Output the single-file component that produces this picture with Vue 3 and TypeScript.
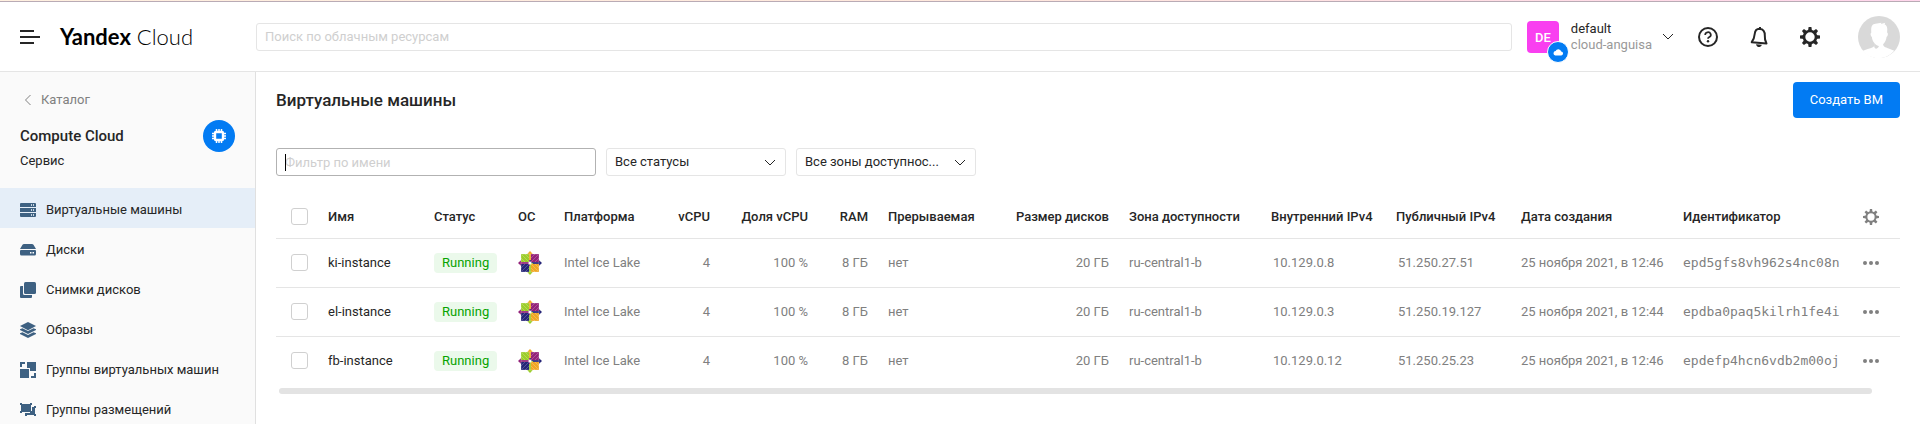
<script setup lang="ts">
import { ref } from 'vue'

interface Instance {
  name: string
  internal: string
  external: string
  created: string
  id: string
}

const instances: Instance[] = [
  { name: 'ki-instance', internal: '10.129.0.8', external: '51.250.27.51', created: '25 ноября 2021, в 12:46', id: 'epd5gfs8vh962s4nc08n' },
  { name: 'el-instance', internal: '10.129.0.3', external: '51.250.19.127', created: '25 ноября 2021, в 12:44', id: 'epdba0paq5kilrh1fe4i' },
  { name: 'fb-instance', internal: '10.129.0.12', external: '51.250.25.23', created: '25 ноября 2021, в 12:46', id: 'epdefp4hcn6vdb2m00oj' },
]

const menu: { icon: string; label: string }[] = [
  { icon: 'servers', label: 'Виртуальные машины' },
  { icon: 'disk', label: 'Диски' },
  { icon: 'snapshots', label: 'Снимки дисков' },
  { icon: 'layers', label: 'Образы' },
  { icon: 'groups', label: 'Группы виртуальных машин' },
  { icon: 'placement', label: 'Группы размещений' },
]

const teeth: number[] = [0, 45, 90, 135, 180, 225, 270, 315]
const search = ref('')
const filter = ref('')
</script>

<template>
  <div class="page">
    <header class="header">
      <div class="brand">
        <button class="icon-btn" type="button" aria-label="Меню">
          <svg width="20" height="14" viewBox="0 0 20 14" fill="none" stroke="#262626" stroke-width="2">
            <path d="M0 1h14M0 7h20M0 13h14" />
          </svg>
        </button>
        <a class="logo" href="#"><b>Yandex</b> Cloud</a>
      </div>
      <input v-model="search" class="field search" type="text" placeholder="Поиск по облачным ресурсам" aria-label="Поиск по облачным ресурсам" />
      <button class="account" type="button">
        <span class="folder">
          DE
          <span class="badge">
            <svg width="10" height="8" viewBox="0 0 10 8" fill="#fff"><path d="M2.2 7.5h5.6a2 2 0 0 0 .4-4A3 3 0 0 0 2.6 3 2.3 2.3 0 0 0 2.2 7.500z" /></svg>
          </span>
        </span>
        <span class="names"><span>default</span><span class="muted">cloud-anguisa</span></span>
        <svg width="12" height="8" viewBox="0 0 12 8" fill="none" stroke="#262626"><path d="M1 1l5 5 5-5" /></svg>
      </button>
      <div class="tools">
        <button class="icon-btn" type="button" aria-label="Помощь">
          <svg width="20" height="20" viewBox="0 0 20 20" fill="none" stroke="#262626" stroke-width="2">
            <circle cx="10" cy="10" r="9" />
            <path d="M7.200 8a2.800 2.600 0 1 1 4.200 2.100c-.9.500-1.400.8-1.400 1.700" stroke-width="1.700" />
            <circle cx="10" cy="14.300" r="1.200" fill="#262626" stroke="none" />
          </svg>
        </button>
        <button class="icon-btn" type="button" aria-label="Уведомления">
          <svg width="18" height="20" viewBox="0 0 18 20" fill="none" stroke="#262626" stroke-width="2" stroke-linejoin="round">
            <path d="M10 1.800C6.800 1.600 5 3.800 4.700 7c-.3 3.600-.9 5.500-3 8.200l14.800 1.300c-1.500-2.600-1.900-5.200-1.700-8.200.2-3.600-1.700-6.300-4.800-6.300z" />
            <path d="M6 17.300c.6 3.600 5 3.600 5.800.4z" fill="#262626" stroke="none" />
            <path d="M10 0v2" />
          </svg>
        </button>
        <button class="icon-btn" type="button" aria-label="Настройки">
          <svg width="20" height="20" viewBox="-10 -10 20 20" fill="#262626">
            <circle r="6" fill="none" stroke="#262626" stroke-width="2.600" />
            <path v-for="a in teeth" :key="a" d="M-2 -6L-1.400 -10H1.400L2 -6z" :transform="`rotate(${a})`" />
          </svg>
        </button>
      </div>
      <button class="icon-btn" type="button" aria-label="Профиль">
        <svg width="42" height="42" viewBox="0 0 42 42">
          <circle cx="21" cy="21" r="21" fill="#d9d9d9" />
          <path d="M4.500 35c3-1.600 7.500-2.300 10.300-3.700 1.400-.7 1.700-2.100 1.600-4.300-1.500-1.600-2.300-3.600-2.500-6-1.500-.7-1.700-3.900-.6-4.300C12.800 10.500 14 8 17.500 7.700l6-.9-.5 1.200 4.300-1.200-.8 1.500c3.500 1.700 2.800 5.400 2.600 8.200 1.200.5.9 3.500-.5 4.300-.3 3.300-1.600 5.800-3.500 7.500.2 2.500 1.800 3 5.500 4.100l5.700 2.400A21 21 0 0 1 4.500 35z" fill="#fff" />
          <path d="M16.400 27c1.800 2.200 3.300 3 4.500 3 -.2 1.500-1.500 2.500-3 2.700-2-.7-2-3-1.500-5.700z" fill="#d9d9d9" />
        </svg>
      </button>
    </header>

    <div class="body">
      <aside class="sidebar">
        <a class="back" href="#">
          <svg width="6" height="12" viewBox="0 0 6 12" fill="none" stroke="#808080"><path d="M5.500 1l-5 5 5 5" /></svg>
          Каталог
        </a>
        <div class="service">
          <div class="service-text"><strong>Compute Cloud</strong><span>Сервис</span></div>
          <span class="chip">
            <svg width="14" height="14" viewBox="0 0 14 14" fill="none" stroke="#fff">
              <rect x="3" y="3" width="8" height="8" rx="1" stroke-width="2.400" />
              <path d="M4.500 0v3M7 0v3M9.500 0v3M4.500 11v3M7 11v3M9.500 11v3M0 4.500h3M0 7h3M0 9.500h3M11 4.500h3M11 7h3M11 9.500h3" stroke-width="1.500" />
            </svg>
          </span>
        </div>
        <nav class="menu">
          <a v-for="(item, i) in menu" :key="item.icon" href="#" :class="{ active: i === 0 }">
            <svg width="16" height="16" viewBox="0 0 16 16" fill="#3e6182">
              <template v-if="item.icon === 'servers'">
                <path d="M1 1h14a1 1 0 0 1 1 1v3H0V2a1 1 0 0 1 1-1zM0 6h16v4H0zM0 11h16v3a1 1 0 0 1-1 1H1a1 1 0 0 1-1-1z" />
                <path d="M11 2h1v2h-1zM13 2h1v2h-1zM11 7h1v2h-1zM13 7h1v2h-1zM11 12h1v2h-1zM13 12h1v2h-1z" fill="#c5d3e0" />
              </template>
              <template v-else-if="item.icon === 'disk'">
                <path d="M4 2h8a2 2 0 0 1 1.500.7L16 7H0l2.500-4.300A2 2 0 0 1 4 2zM1 8h14a1 1 0 0 1 1 1v3a1.500 1.500 0 0 1-1.500 1.500h-13A1.500 1.500 0 0 1 0 12V9a1 1 0 0 1 1-1z" />
                <path d="M10 10h1.500v1.500H10zM12.500 10H14v1.500h-1.500z" fill="#fff" />
              </template>
              <template v-else-if="item.icon === 'snapshots'">
                <rect x="4" width="12" height="12" rx="1.500" />
                <path d="M1 4h2v7.500A1.500 1.500 0 0 0 4.500 13H12v2a1 1 0 0 1-1 1H1a1 1 0 0 1-1-1V5a1 1 0 0 1 1-1z" />
              </template>
              <template v-else-if="item.icon === 'layers'">
                <path d="M8 0l8 4-8 4.200L0 4z" />
                <path d="M0 7.200l2.500-.9L8 9l5.500-2.700 2.500.9v.8l-8 4-8-4zM0 11.200l2.500-.9L8 13l5.500-2.700 2.500.9v.8l-8 4-8-4z" />
              </template>
              <template v-else-if="item.icon === 'groups'">
                <path d="M0 0h5v2H2v3H0zM7 0h9v9h-6V6H7zM0 7h9v9H0zM14 11h2v5h-5v-2h3z" />
              </template>
              <template v-else>
                <path d="M0 1h2v1h8V1h2v2h-1v6h1v2h-2v-1H2v1H0V9h1V3H0z" />
                <path d="M13 5h1V4h2v2h-1v6h1v2h-2v-1H7v1H5v-3h7V5z" />
              </template>
            </svg>
            {{ item.label }}
          </a>
        </nav>
      </aside>

      <main class="main">
        <div class="title-row">
          <h1>Виртуальные машины</h1>
          <button class="create" type="button">Создать ВМ</button>
        </div>
        <div class="filters">
          <div class="name-filter">
            <input v-model="filter" class="field focused" type="text" placeholder="Фильтр по имени" aria-label="Фильтр по имени" />
            <span class="caret"></span>
          </div>
          <div class="select">
            <select class="field" aria-label="Статус"><option>Все статусы</option></select>
            <svg width="12" height="8" viewBox="0 0 12 8" fill="none" stroke="#262626"><path d="M1 1l5 5 5-5" /></svg>
          </div>
          <div class="select">
            <select class="field" aria-label="Зона доступности"><option>Все зоны доступнос...</option></select>
            <svg width="12" height="8" viewBox="0 0 12 8" fill="none" stroke="#262626"><path d="M1 1l5 5 5-5" /></svg>
          </div>
        </div>

        <table>
          <colgroup>
            <col class="w-check" /><col class="w-name" /><col class="w-status" /><col class="w-os" /><col class="w-platform" />
            <col class="w-cpu" /><col class="w-share" /><col class="w-ram" /><col class="w-preempt" /><col class="w-disk" />
            <col class="w-zone" /><col class="w-ip" /><col class="w-ip" /><col class="w-date" /><col class="w-id" /><col class="w-act" />
          </colgroup>
          <thead>
            <tr>
              <th class="check"><input type="checkbox" aria-label="Выбрать все" /></th>
              <th>Имя</th>
              <th>Статус</th>
              <th>ОС</th>
              <th>Платформа</th>
              <th class="num">vCPU</th>
              <th class="num">Доля vCPU</th>
              <th class="num">RAM</th>
              <th>Прерываемая</th>
              <th class="num">Размер дисков</th>
              <th>Зона доступности</th>
              <th>Внутренний IPv4</th>
              <th>Публичный IPv4</th>
              <th>Дата создания</th>
              <th>Идентификатор</th>
              <th class="act">
                <button class="icon-btn" type="button" aria-label="Настройки таблицы">
                  <svg width="16" height="16" viewBox="-10 -10 20 20" fill="#808080">
                    <circle r="5.800" fill="none" stroke="#808080" stroke-width="2.500" />
                    <path v-for="a in teeth" :key="a" d="M-1.800 -6L-1.400 -10H1.400L1.800 -6z" :transform="`rotate(${a})`" />
                  </svg>
                </button>
              </th>
            </tr>
          </thead>
          <tbody>
            <tr v-for="vm in instances" :key="vm.id">
              <td class="check"><input type="checkbox" :aria-label="vm.name" /></td>
              <td><a class="vm" href="#">{{ vm.name }}</a></td>
              <td><span class="tag">Running</span></td>
              <td>
                <svg width="24" height="24" viewBox="0 0 24 24" role="img" aria-label="CentOS">
                  <path d="M12 0l3 3.200V12H9V3.200z" fill="#efa724" />
                  <path d="M24 12l-3.200 3H12V9h8.800z" fill="#262577" />
                  <path d="M12 24l-3-3.200V12h6v8.800z" fill="#9ccd2a" />
                  <path d="M0 12l3.200-3H12v6H3.200z" fill="#932279" />
                  <path d="M3 3h8v8H3z" fill="#9ccd2a" />
                  <path d="M13 3h8v8h-8z" fill="#932279" />
                  <path d="M13 13h8v8h-8z" fill="#efa724" />
                  <path d="M3 13h8v8H3z" fill="#262577" />
                  <path d="M3 3h18v18H3z" fill="none" stroke="#fff" stroke-width=".5" stroke-opacity=".5" />
                  <path d="M4 4l16 16M20 4L4 20M7 3l4 4M3 7l4 4M17 3l-4 4M21 7l-4 4M7 21l4-4M3 17l4-4M17 21l-4-4M21 17l-4-4" stroke="#fff" stroke-width=".5" stroke-opacity=".45" />
                  <path d="M12 3v18M3 12h18" stroke="#fff" stroke-width=".6" stroke-opacity=".4" />
                  <circle cx="12" cy="12" r="1.600" fill="#fff" />
                </svg>
              </td>
              <td>Intel Ice Lake</td>
              <td class="num">4</td>
              <td class="num">100 %</td>
              <td class="num">8 ГБ</td>
              <td>нет</td>
              <td class="num">20 ГБ</td>
              <td>ru-central1-b</td>
              <td class="ip">{{ vm.internal }}</td>
              <td class="ip">{{ vm.external }}</td>
              <td>{{ vm.created }}</td>
              <td class="id">{{ vm.id }}</td>
              <td class="act">
                <button class="icon-btn" type="button" aria-label="Действия">
                  <svg width="16" height="4" viewBox="0 0 16 4" fill="#808080"><circle cx="2" cy="2" r="2" /><circle cx="8" cy="2" r="2" /><circle cx="14" cy="2" r="2" /></svg>
                </button>
              </td>
            </tr>
          </tbody>
        </table>
        <div class="scrollbar"></div>
      </main>
    </div>
  </div>
</template>

<style>
body { background: #fff; overflow: hidden; }
</style>

<style scoped>
.page, .page * { box-sizing: border-box; }
.page {
  display: flex;
  flex-direction: column;
  height: 100vh;
  font: 13px/18px Roboto, "Noto Sans", sans-serif;
  color: #262626;
}
.page::before {
  content: "";
  flex: none;
  height: 1px;
  background: linear-gradient(90deg, #fff0e0, #ffe8dc 50%, #ffd6ec);
  border-bottom: 1px solid #b9abb5;
}
a { color: inherit; text-decoration: none; }
button, input, select { font: inherit; color: inherit; }
svg { display: block; flex: none; }
.icon-btn { display: block; padding: 0; border: 0; background: none; }
.header {
  flex: none;
  display: flex;
  align-items: center;
  height: 70px;
  padding-right: 20px;
  border-bottom: 1px solid #e5e5e5;
}
.brand { flex: none; display: flex; align-items: center; gap: 20px; width: 256px; padding-left: 20px; }
.logo { font: 300 22px/32px Lato, Roboto, sans-serif; color: #000; white-space: nowrap; }
.logo b { font-weight: 700; }
.field {
  display: block;
  width: 100%;
  height: 28px;
  padding: 0 8px;
  border: 1px solid #e5e5e5;
  border-radius: 3px;
  background: #fff;
  outline: 0;
}
.field::placeholder { color: #cfcfcf; opacity: 1; }
.search { flex: 1; min-width: 0; }
.account { display: flex; align-items: center; gap: 12px; margin-left: 15px; padding: 0; border: 0; background: none; text-align: left; }
.folder {
  position: relative;
  display: block;
  width: 32px;
  height: 32px;
  border-radius: 4px;
  background: #f93ff0;
  color: #fff;
  font-weight: 500;
  line-height: 34px;
  text-align: center;
}
.badge {
  position: absolute;
  right: -10px;
  bottom: -10px;
  display: grid;
  place-items: center;
  width: 22px;
  height: 22px;
  border: 1px solid #fff;
  border-radius: 50%;
  background: #027bf3;
}
.names { display: flex; flex-direction: column; line-height: 16px; }
.muted { color: #999; }
.tools { display: flex; align-items: center; gap: 32px; margin: 0 38px 0 24px; }
.account > svg { margin-left: -2px; }
.body { flex: 1; display: flex; min-height: 0; }
.sidebar { flex: none; width: 256px; padding-top: 19px; border-right: 1px solid #e0e0e0; background: #fafafa; }
.back { display: flex; align-items: center; gap: 10px; padding-left: 25px; color: #808080; }
.service { display: flex; justify-content: space-between; padding: 11px 20px 18px; }
.service-text { display: flex; flex-direction: column; gap: 6px; padding-top: 6px; }
.service strong { font-size: 15px; line-height: 20px; font-weight: 500; }
.chip { display: grid; place-items: center; width: 32px; height: 32px; border-radius: 50%; background: #027bf3; }
.menu a { display: flex; align-items: center; gap: 10px; height: 40px; padding: 3px 20px 0; white-space: nowrap; }
.menu a.active { background: #e5eef8; }
.main { flex: 1; min-width: 0; padding: 10px 20px 0; }
.title-row { display: flex; align-items: center; justify-content: space-between; }
h1 { margin: 0; font-size: 17px; line-height: 24px; font-weight: 500; }
.create { height: 36px; padding: 0 17px; border: 0; border-radius: 4px; background: #027bf3; color: #fff; }
.filters { display: flex; gap: 10px; margin: 30px 0 20px; }
.name-filter { position: relative; width: 320px; }
.focused { border-color: #b2b2b2; }
.caret { position: absolute; top: 6px; left: 9px; width: 1px; height: 17px; background: #000; }
.select { position: relative; width: 180px; }
.select select { appearance: none; }
.select svg { position: absolute; top: 11px; right: 10px; pointer-events: none; }
table { width: 100%; table-layout: fixed; border-collapse: collapse; }
th, td { height: 49px; padding: 0 10px; text-align: left; vertical-align: middle; white-space: nowrap; }
th { height: 42px; font-weight: 500; }
td { color: #808080; }
tr { border-bottom: 1px solid #e5e5e5; }
tbody tr:last-child { border-bottom: 0; }
.num { text-align: right; }
.check { padding: 0 0 0 15px; }
.check input {
  display: block;
  appearance: none;
  width: 17px;
  height: 17px;
  margin: 0;
  border: 1px solid #d0d0d0;
  border-radius: 3px;
  background: #fff;
}
.vm { color: #262626; }
.tag { display: inline-block; padding: 1px 8px; border-radius: 4px; background: #ebf9eb; color: #07a300; }
.ip { padding-left: 12px; }
.id { font-family: "DejaVu Sans Mono", monospace; }
.act { padding: 0 0 0 14px; }
.w-check { width: 42px; }
.w-name { width: 106px; }
.w-status { width: 84px; }
.w-os { width: 46px; }
.w-platform { width: 106px; }
.w-cpu { width: 60px; }
.w-share { width: 98px; }
.w-ram { width: 60px; }
.w-preempt { width: 106px; }
.w-disk { width: 135px; }
.w-zone { width: 142px; }
.w-ip { width: 125px; }
.w-date { width: 162px; }
.w-id { width: 176px; }
.w-act { width: 51px; }
.scrollbar { height: 6px; margin: 3px 28px 0 3px; border-radius: 3px; background: #e3e3e3; }
</style>
